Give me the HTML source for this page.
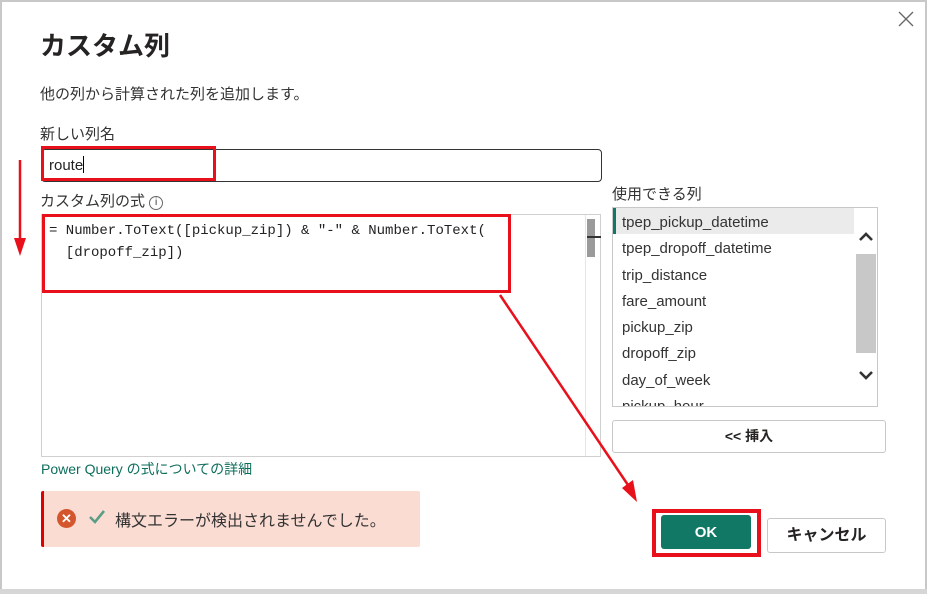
<!DOCTYPE html>
<html><head><meta charset="utf-8"><style>
*{margin:0;padding:0;box-sizing:border-box}
body{width:927px;height:594px;background:#fff;position:relative;overflow:hidden;font-family:"Liberation Sans","Noto Sans CJK JP",sans-serif;color:#252423}
.a{position:absolute}
.mono{font-family:"Liberation Mono","Noto Sans CJK JP",monospace}
</style></head><body>
<div class="a" style="left:0;top:0;width:927px;height:592px;border:2px solid #c8c8c8;border-bottom:none;border-right:2px solid #c8c8c8"></div>
<div class="a" style="left:0;top:589px;width:927px;height:5px;background:#d6d6d6"></div>
<svg class="a" style="left:897px;top:10px" width="18" height="18"><path d="M2 2 L16 16 M16 2 L2 16" stroke="#666" stroke-width="1.3"/></svg>
<div class="a" style="left:40px;top:26px;font-size:26px;font-weight:bold;color:#252423">カスタム列</div>
<div class="a" style="left:40px;top:83px;font-size:15px;color:#333">他の列から計算された列を追加します。</div>
<div class="a" style="left:40px;top:123px;font-size:15px;color:#333">新しい列名</div>
<div class="a" style="left:41px;top:149px;width:561px;height:33px;border:1.5px solid #333;border-radius:4px"></div>
<div class="a" style="left:49px;top:156px;font-size:15px;color:#222">route<span style="border-left:1px solid #000;margin-left:0;display:inline-block;height:17px;vertical-align:-3px"></span></div>
<div class="a" style="left:41px;top:146px;width:175px;height:35px;border:3px solid #e8101a"></div>
<div class="a" style="left:40px;top:190px;font-size:15px;color:#333">カスタム列の式 <span style="display:inline-block;width:14px;height:14px;border:1px solid #666;border-radius:50%;font-size:10px;text-align:center;line-height:12px;vertical-align:1px">i</span></div>
<div class="a" style="left:41px;top:214px;width:560px;height:243px;border:1px solid #d0d0d0"></div>
<div class="a" style="left:585px;top:215px;width:15px;height:241px;border-left:1px solid #e6e6e6"></div>
<div class="a" style="left:587px;top:219px;width:8px;height:38px;background:#9a9a9a"></div>
<div class="a" style="left:587px;top:236px;width:14px;height:2px;background:#333"></div>
<div class="a mono" style="left:49px;top:220px;font-size:14px;line-height:22px;color:#222;white-space:pre">= Number.ToText([pickup_zip]) &amp; "-" &amp; Number.ToText(
  [dropoff_zip])</div>
<div class="a" style="left:42px;top:214px;width:469px;height:79px;border:3px solid #e8101a"></div>
<div class="a" style="left:612px;top:183px;font-size:15px;color:#333">使用できる列</div>
<div class="a" style="left:612px;top:207px;width:266px;height:200px;border:1px solid #c8c8c8"></div>
<div class="a" style="left:613px;top:208px;width:241px;height:26px;background:#ebebeb;border-left:3px solid #117865"></div>
<div class="a" style="left:622px;top:210px;font-size:15px;line-height:26.3px;color:#333;height:196px;overflow:hidden">tpep_pickup_datetime<br>tpep_dropoff_datetime<br>trip_distance<br>fare_amount<br>pickup_zip<br>dropoff_zip<br>day_of_week<br>pickup_hour</div>
<div class="a" style="left:855px;top:208px;width:22px;height:198px;background:#fff"></div>
<div class="a" style="left:856px;top:254px;width:20px;height:99px;background:#c8c8c8"></div>
<svg class="a" style="left:857px;top:230px" width="18" height="14"><path d="M3 10 L9 4 L15 10" stroke="#333" stroke-width="2.6" fill="none"/></svg>
<svg class="a" style="left:857px;top:368px" width="18" height="14"><path d="M3 4 L9 10 L15 4" stroke="#333" stroke-width="2.6" fill="none"/></svg>
<div class="a" style="left:612px;top:420px;width:274px;height:33px;border:1px solid #c8c8c8;border-radius:3px;font-size:14px;font-weight:bold;text-align:center;line-height:31px;color:#252423">&lt;&lt; 挿入</div>
<div class="a" style="left:41px;top:459px;font-size:14px;color:#0e6e5c">Power Query の式についての詳細</div>
<div class="a" style="left:41px;top:491px;width:379px;height:56px;background:#fadcd3;border-left:3px solid #e00000;border-radius:2px"></div>
<div class="a" style="left:57px;top:509px;width:19px;height:19px;border-radius:50%;background:#d4562d;color:#fff;font-size:13px;font-weight:bold;text-align:center;line-height:19px">✕</div>
<svg class="a" style="left:87px;top:508px" width="20" height="18"><path d="M3 9 L8 14 L17 3" stroke="#5a9e86" stroke-width="2.6" fill="none"/></svg>
<div class="a" style="left:115px;top:507px;font-size:16px;color:#333">構文エラーが検出されませんでした。</div>
<div class="a" style="left:652px;top:509px;width:109px;height:48px;border:4px solid #e8101a"></div>
<div class="a" style="left:661px;top:515px;width:90px;height:34px;background:#117865;border-radius:3px;color:#fff;font-weight:bold;font-size:15px;text-align:center;line-height:36px">OK</div>
<div class="a" style="left:767px;top:518px;width:119px;height:35px;border:1px solid #c8c8c8;border-radius:3px;font-size:16px;font-weight:bold;text-align:center;line-height:33px;color:#252423">キャンセル</div>
<svg class="a" style="left:0;top:0" width="927" height="594">
<line x1="20" y1="160" x2="20" y2="245" stroke="#e8101a" stroke-width="2.5"/>
<path d="M14 238 L20 256 L26 238 Z" fill="#e8101a"/>
<line x1="500" y1="295" x2="630" y2="488" stroke="#e8101a" stroke-width="2.5"/>
<path d="M622 488 L637 502 L633 480 Z" fill="#e8101a"/>
</svg>
</body></html>
